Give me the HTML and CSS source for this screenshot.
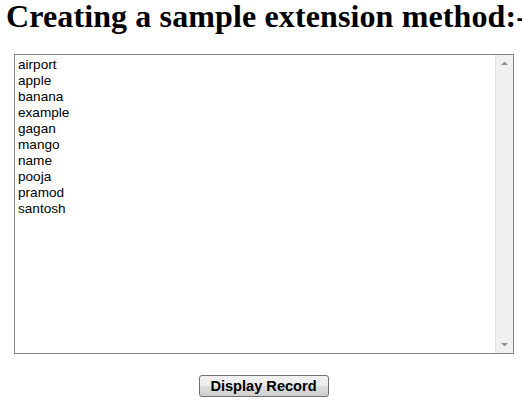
FILE: index.html
```html
<!DOCTYPE html>
<html>
<head>
<meta charset="utf-8">
<link rel="stylesheet" href="styles.css">
</head>
<body>
<h1 class="title">Creating a sample extension method:-</h1>
<div class="listbox">
  <ul class="items">
    <li>airport</li>
    <li>apple</li>
    <li>banana</li>
    <li>example</li>
    <li>gagan</li>
    <li>mango</li>
    <li>name</li>
    <li>pooja</li>
    <li>pramod</li>
    <li>santosh</li>
  </ul>
  <div class="scrollbar">
    <svg class="arrow" width="17" height="17" viewBox="0 0 17 17"><path d="M5 10 L12 10 L8.5 6.5 Z" fill="#909090"/></svg>
    <div class="track"></div>
    <svg class="arrow" width="17" height="17" viewBox="0 0 17 17"><path d="M5 7 L12 7 L8.5 10.5 Z" fill="#909090"/></svg>
  </div>
</div>
<div class="actions">
  <button class="btn">Display Record</button>
</div>
</body>
</html>
```
FILE: styles.css
```css
html, body {
  margin: 0;
  padding: 0;
  background: #ffffff;
  overflow: hidden;
}
body {
  width: 522px;
  height: 404px;
}
.title {
  font-family: "Liberation Serif", serif;
  font-weight: bold;
  font-size: 32px;
  letter-spacing: 0.12px;
  line-height: 32px;
  margin: 0 0 22px 6px;
  white-space: nowrap;
  color: #000;
}
.listbox {
  margin-left: 14px;
  width: 500px;
  height: 300px;
  box-sizing: border-box;
  border: 1px solid #828282;
  display: flex;
  background: #fff;
}
.items {
  list-style: none;
  margin: 0;
  padding: 2px 0 0 3px;
  flex: 1;
  font-family: "Liberation Sans", Arial, sans-serif;
  font-size: 13.6px;
  line-height: 16px;
  color: #000;
}
.scrollbar {
  width: 17px;
  display: flex;
  flex-direction: column;
  background: #f0f0f0;
  border-left: 1px solid #e6e6e6;
}
.arrow {
  display: block;
}
.track {
  flex: 1;
}
.actions {
  display: flex;
  justify-content: center;
  margin-top: 21px;
  padding-left: 5px;
}
.btn {
  font-family: "Liberation Sans", Arial, sans-serif;
  font-weight: bold;
  font-size: 14.6px;
  color: #000;
  width: 130px;
  height: 22px;
  padding: 0;
  border: 1px solid #707070;
  border-radius: 3px;
  background: linear-gradient(#f2f2f2 0%, #ebebeb 50%, #dddddd 51%, #cfcfcf 100%);
}
```
